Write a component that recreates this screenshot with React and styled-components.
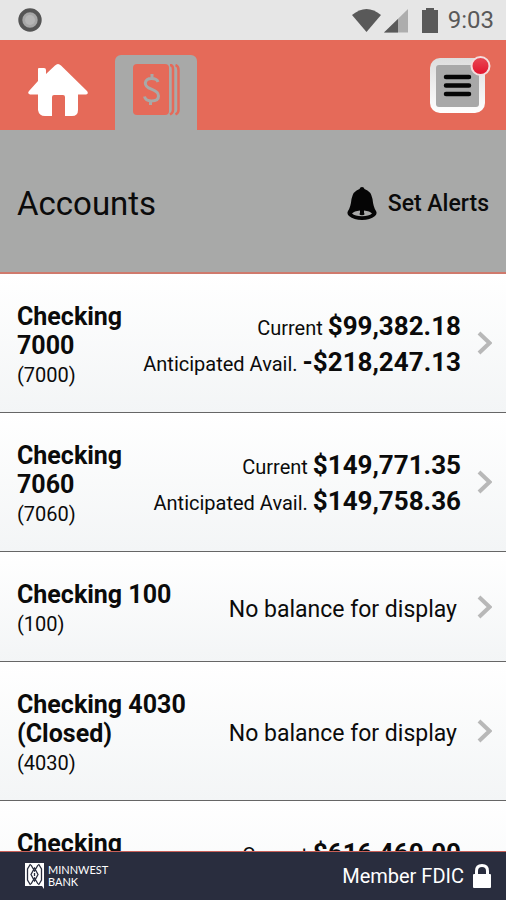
import React from "react";
import styled, { createGlobalStyle } from "styled-components";

const GlobalStyle = createGlobalStyle`
  * { box-sizing: border-box; }
  body { margin: 0; font-family: Roboto, "Liberation Sans", sans-serif; color: #0b0b0b; background: #fff; }
  button, a { font: inherit; color: inherit; text-decoration: none; }
`;

const Screen = styled.div`
  display: flex;
  flex-direction: column;
  height: 100vh;
  overflow: hidden;
`;

const StatusBar = styled.div`
  flex: none;
  display: flex;
  align-items: center;
  justify-content: space-between;
  height: 40px;
  padding: 0 12px 0 18px;
  background: #e6e6e6;
  color: #595959;
`;

const StatusIcons = styled.div`
  display: flex;
  align-items: center;
`;

const Clock = styled.time`
  margin-left: 10px;
  font-size: 24px;
  line-height: 40px;
`;

const NavBar = styled.header`
  flex: none;
  display: flex;
  align-items: flex-end;
  justify-content: space-between;
  height: 90px;
  padding: 0 15px 0 28px;
  background: #e56a59;
`;

const Tabs = styled.nav`
  display: flex;
  align-items: flex-end;
  gap: 27px;
`;

const HomeLink = styled.a`
  display: flex;
  height: 67px;
`;

const AccountsTab = styled.a`
  display: flex;
  justify-content: center;
  width: 82px;
  height: 75px;
  padding-top: 9px;
  border-radius: 6px 6px 0 0;
  background: #a8a9a8;
`;

const MenuButton = styled.button`
  display: flex;
  margin-bottom: 16px;
  padding: 0;
  border: 0;
  background: none;
`;

const TitleBar = styled.div`
  flex: none;
  display: flex;
  align-items: center;
  justify-content: space-between;
  height: 144px;
  padding: 5px 17px 0;
  border-bottom: 2px solid #cf7a6d;
  background: #a8a9a8;
`;

const Title = styled.h1`
  margin: 0;
  font-size: 33px;
  font-weight: 400;
  line-height: 40px;
`;

const AlertsButton = styled.button`
  display: flex;
  align-items: center;
  gap: 11px;
  padding: 0;
  border: 0;
  background: none;
  font-size: 23px;
  font-weight: 500;
`;

const AccountList = styled.main`
  flex: 1;
  min-height: 0;
  overflow: hidden;
`;

const AccountRow = styled.a`
  display: flex;
  align-items: center;
  gap: 16px;
  padding: 28px 14px 22px 17px;
  border-bottom: 1px solid #666;
  background: linear-gradient(#fff, #f3f5f6);
`;

const AccountName = styled.div`
  flex: 1;
  min-width: 0;
`;

const Name = styled.div`
  max-width: 180px;
  font-size: 25px;
  font-weight: 700;
  line-height: 29px;
`;

const AccountNumber = styled.div`
  font-size: 20px;
  line-height: 30px;
`;

const Balances = styled.div`
  flex: none;
  text-align: right;
`;

const Balance = styled.div`
  font-size: 20px;
  line-height: 36px;
  white-space: nowrap;
`;

const Amount = styled.strong`
  font-size: 26px;
  font-weight: 700;
  line-height: 20px;
`;

const NoBalance = styled.div`
  padding-right: 4px;
  font-size: 23px;
  line-height: 36px;
`;

const RowArrow = styled.span`
  display: flex;
  padding-bottom: 6px;
`;

const Footer = styled.footer`
  flex: none;
  display: flex;
  align-items: center;
  justify-content: space-between;
  height: 49px;
  padding: 0 15px 0 25px;
  border-top: 1px solid #c85f58;
  background: #292d3e;
  color: #fff;
`;

const Brand = styled.div`
  display: flex;
  align-items: center;
  gap: 4px;
  font-family: Lato, sans-serif;
  font-size: 11px;
  line-height: 12px;
`;

const BrandLine = styled.span`
  display: block;
`;

const Member = styled.div`
  display: flex;
  align-items: center;
  gap: 9px;
  font-size: 20px;
`;

const RecordIcon = () => (
  <svg width="24" height="24" viewBox="0 0 24 24">
    <circle cx="12" cy="12" r="9.7" fill="#a6a6a6" stroke="#555" strokeWidth="4" />
    <circle cx="12" cy="12" r="5" fill="#b5b5b5" />
  </svg>
);

const SignalIcons = () => (
  <svg width="86" height="26" viewBox="0 0 86 26">
    <path d="M0 8Q14.500 -4 29 8L14.500 25Z" fill="#595959" />
    <path d="M32 25.500L56 2V25.500Z" fill="#adadad" />
    <path d="M32 25.500L46 12V25.500Z" fill="#595959" />
    <path d="M70 3h4V1h8v2h4v23H70Z" fill="#595959" />
  </svg>
);

const HomeIcon = () => (
  <svg width="60" height="54" viewBox="0 0 60 54">
    <path
      d="M11 5h5q2 0 2 2v4L27 2.500q3-3 6 0L59 28q2 3-1 3.500h-8V47q0 6-6 6H37V34q0-2-2-2H26q-2 0-2 2V53H17q-6 0-7-6V31.500H2q-3-1-1-3.500L10 18V6q0-1 1-1Z"
      fill="#fff"
    />
  </svg>
);

const LedgerIcon = () => (
  <svg width="48" height="52" viewBox="0 0 48 52" fill="none">
    <rect x="1" y="0" width="36" height="51" rx="4" fill="#e56a59" />
    <path d="M38 1q3 0 3 4V46q0 3-3 4.500M43.500 1Q46.500 2 46.500 6V46q0 3-3 4.500" stroke="#e56a59" strokeWidth="2.500" />
    <path
      d="M26 18q-1-3.500-6.500-3.500t-6.200 4.500q0 4 6.200 6.200 7 2.600 7 6.800 0 5-7 5-6 0-7-4.500M20 10v5M18.500 36v5"
      stroke="#a8a9a8"
      strokeWidth="3"
    />
  </svg>
);

const MenuIcon = () => (
  <svg width="62" height="58" viewBox="0 0 62 58">
    <defs>
      <linearGradient id="menuFrame" x1="0" y1="0" x2="0" y2="1">
        <stop offset="0" stopColor="#ddd" />
        <stop offset="1" stopColor="#fff" />
      </linearGradient>
      <linearGradient id="badge" x1="0" y1="0" x2="0" y2="1">
        <stop offset="0" stopColor="#e84a55" />
        <stop offset="1" stopColor="#e3122c" />
      </linearGradient>
    </defs>
    <rect x="1" y="2" width="55" height="55" rx="10" fill="url(#menuFrame)" />
    <rect x="7" y="9" width="43" height="42" rx="3" fill="#a8a8a8" />
    <path d="M17 21h23M17 29.500h23M17 38h23" stroke="#050505" strokeWidth="4.500" strokeLinecap="round" />
    <circle cx="51.500" cy="10" r="9" fill="url(#badge)" stroke="#f3dede" strokeWidth="2" />
  </svg>
);

const BellIcon = () => (
  <svg width="30" height="33" viewBox="0 0 30 33">
    <path
      d="M15 0q2 0 2.500 2Q24 4 25.500 12q.8 8 3.500 12 1.500 3-1 5-5 4-13 4T2 29q-2.500-2-1-5 2.700-4 3.500-12Q6 4 12.500 2 13 0 15 0Z"
      fill="#050505"
    />
    <path d="M5 26.500q2-2.500 8-3v2.200q-1.500 2.500 2 2.500t2-2.500v-2.200q6 .5 8 3-3 2.700-10 2.700T5 26.500Z" fill="#a8a9a8" />
  </svg>
);

const Chevron = () => (
  <svg width="15" height="24" viewBox="0 0 15 24" fill="none">
    <path d="M2 2L12.500 12 2 22" stroke="#b8b8b8" strokeWidth="4" />
  </svg>
);

const BankMark = () => (
  <svg width="19" height="26" viewBox="0 0 19 26" fill="none">
    <path d="M0 0h19v26l-2-3H0Z" fill="#fff" />
    <path
      d="M5.500 1L2.500 6v11l3 5M13.500 1l3 5v11l-3 5M9.500 5L6 11.500 9.500 18l3.500-6.500ZM6 2l3.500 6L13 2M6 21l3.500-6 3.500 6M9.500 10v3"
      stroke="#292d3e"
      strokeWidth="1.300"
    />
  </svg>
);

const LockIcon = () => (
  <svg width="18" height="24" viewBox="0 0 18 24" fill="none">
    <rect y="10" width="18" height="14" rx="1" fill="#fff" />
    <path d="M3.500 11V7q0-5.500 5.500-5.500T14.500 7v4" stroke="#fff" strokeWidth="3" />
  </svg>
);

const accounts = [
  { name: "Checking 7000", number: "7000", current: "$99,382.18", available: "-$218,247.13" },
  { name: "Checking 7060", number: "7060", current: "$149,771.35", available: "$149,758.36" },
  { name: "Checking 100", number: "100" },
  { name: "Checking 4030 (Closed)", number: "4030" },
  { name: "Checking 8000", number: "8000", current: "$616,460.00", available: "$616,460.00" },
];

export default function App() {
  return (
    <Screen>
      <GlobalStyle />
      <StatusBar>
        <RecordIcon />
        <StatusIcons>
          <SignalIcons />
          <Clock>9:03</Clock>
        </StatusIcons>
      </StatusBar>
      <NavBar>
        <Tabs>
          <HomeLink href="#home" aria-label="Home"><HomeIcon /></HomeLink>
          <AccountsTab href="#accounts" aria-label="Accounts"><LedgerIcon /></AccountsTab>
        </Tabs>
        <MenuButton aria-label="Menu"><MenuIcon /></MenuButton>
      </NavBar>
      <TitleBar>
        <Title>Accounts</Title>
        <AlertsButton><BellIcon />Set Alerts</AlertsButton>
      </TitleBar>
      <AccountList>
        {accounts.map((account) => (
          <AccountRow key={account.number} href={`#account-${account.number}`}>
            <AccountName>
              <Name>{account.name}</Name>
              <AccountNumber>({account.number})</AccountNumber>
            </AccountName>
            {account.current ? (
              <Balances>
                <Balance>Current <Amount>{account.current}</Amount></Balance>
                <Balance>Anticipated Avail. <Amount>{account.available}</Amount></Balance>
              </Balances>
            ) : (
              <NoBalance>No balance for display</NoBalance>
            )}
            <RowArrow><Chevron /></RowArrow>
          </AccountRow>
        ))}
      </AccountList>
      <Footer>
        <Brand>
          <BankMark />
          <div>
            <BrandLine>MINNWEST</BrandLine>
            <BrandLine>BANK</BrandLine>
          </div>
        </Brand>
        <Member>Member FDIC <LockIcon /></Member>
      </Footer>
    </Screen>
  );
}
